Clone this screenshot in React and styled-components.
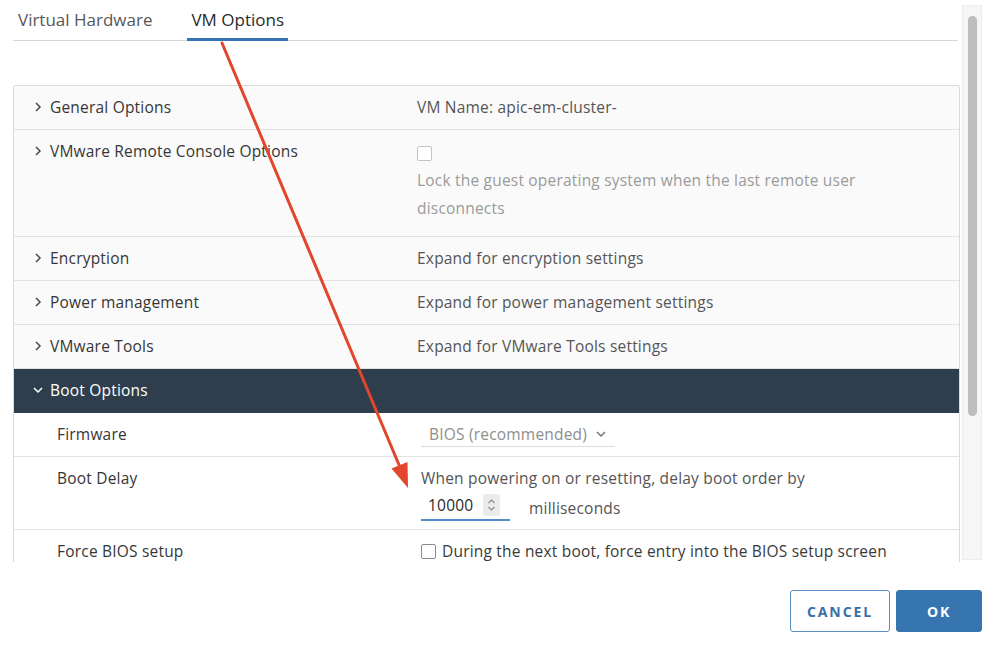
import React from 'react';
import styled, { createGlobalStyle } from 'styled-components';

const GlobalStyle = createGlobalStyle`
  html, body {
    margin: 0;
    padding: 0;
    background: #ffffff;
  }
  body {
    font-family: "Open Sans", "Liberation Sans", sans-serif;
    color: #333;
  }
`;

const Dialog = styled.div`
  position: relative;
  width: 999px;
  height: 651px;
  overflow: hidden;
  background: #fff;
`;

const Main = styled.div`
  display: flex;
  height: 562px;
  padding-left: 13px;
`;

const Content = styled.div`
  width: 947px;
  display: flex;
  flex-direction: column;
  overflow: hidden;
`;

const TabBar = styled.div`
  display: flex;
  gap: 31px;
  height: 40px;
  margin-right: 2px;
  padding-left: 1px;
  border-bottom: 1px solid #d7d7d7;
  flex-shrink: 0;
`;

const Tab = styled.div`
  padding: 0 4px;
  font-size: 17px;
  line-height: 40px;
  color: ${(p) => (p.$active ? '#2b2b2b' : '#575757')};
  box-shadow: ${(p) => (p.$active ? 'inset 0 -3px 0 #3474b4' : 'none')};
  margin-bottom: -1px;
  height: 41px;
  box-sizing: border-box;
`;

const Table = styled.div`
  margin-top: 44px;
  border: 1px solid #dadada;
  border-bottom: none;
  border-radius: 3px 3px 0 0;
  flex: 1;
  overflow: hidden;
`;

const Row = styled.div`
  display: grid;
  grid-template-columns: 403px 1fr;
  align-items: start;
  background: ${(p) => (p.$dark ? '#2e3e4d' : p.$sub ? '#ffffff' : '#fafafa')};
  border-bottom: 1px solid ${(p) => (p.$dark ? '#2e3e4d' : '#e3e3e3')};
  padding: 11px 0 ${(p) => p.$pb || 12}px;
  font-size: 15.5px;
  letter-spacing: 0.2px;
  line-height: 20px;
`;

const Label = styled.div`
  display: flex;
  align-items: center;
  gap: 6px;
  padding-left: ${(p) => (p.$sub ? 43 : 18)}px;
  color: ${(p) => (p.$dark ? '#ffffff' : '#363636')};
`;

const Value = styled.div`
  padding-left: ${(p) => (p.$sub ? 4 : 0)}px;
  color: ${(p) => (p.$muted ? '#9b9b9b' : '#555555')};
`;

const Box = styled.span`
  display: inline-block;
  flex-shrink: 0;
  width: 15px;
  height: 15px;
  border: 1px solid ${(p) => (p.$disabled ? '#c4c4c4' : '#8a8a8a')};
  border-radius: 2px;
  background: #fff;
  box-sizing: border-box;
  vertical-align: middle;
  margin-top: ${(p) => (p.$disabled ? 2 : 0)}px;
`;

const CheckLine = styled.div`
  display: flex;
  align-items: center;
  gap: 6px;
  color: #3a3a3a;
`;

const Wrapped = styled.div`
  margin-top: 5px;
  line-height: 28px;
  width: 470px;
`;

const Select = styled.div`
  display: inline-flex;
  align-items: center;
  gap: 8px;
  width: 194px;
  box-sizing: border-box;
  padding: 0 0 2px 8px;
  border-bottom: 1px solid #dcdcdc;
  color: #8e8e8e;
`;

const InputLine = styled.div`
  display: flex;
  align-items: center;
  gap: 19px;
  margin-top: 6px;
  color: #555;
`;

const NumberInput = styled.div`
  display: flex;
  align-items: center;
  justify-content: space-between;
  width: 89px;
  box-sizing: border-box;
  padding: 0 10px 3px 7px;
  border-bottom: 2px solid #4e8ccb;
  color: #2a2a2a;
`;

const Spinner = styled.span`
  display: inline-flex;
  align-items: center;
  justify-content: center;
  width: 17px;
  height: 22px;
  background: #ebebeb;
  border-radius: 2px;
`;

const Scrollbar = styled.div`
  width: 20px;
  margin: 5px 0 2px 2px;
  background: #f6f6f6;
  border: 1px solid #ededed;
  box-sizing: border-box;
  display: flex;
  justify-content: center;
  padding-top: 10px;
`;

const Thumb = styled.div`
  width: 9px;
  height: 400px;
  border-radius: 5px;
  background: #bdbdbd;
`;

const Footer = styled.div`
  display: flex;
  justify-content: flex-end;
  gap: 6px;
  padding: 28px 17px 0 0;
`;

const Button = styled.button`
  height: 42px;
  width: ${(p) => p.$w}px;
  border-radius: 3px;
  font-family: "Open Sans", "Liberation Sans", sans-serif;
  font-size: 14px;
  font-weight: 700;
  letter-spacing: 1.9px;
  cursor: pointer;
  border: 1px solid ${(p) => (p.$primary ? '#3775b1' : '#5a8fc4')};
  background: ${(p) => (p.$primary ? '#3775b1' : '#ffffff')};
  color: ${(p) => (p.$primary ? '#ffffff' : '#3a6fa5')};
`;

const Overlay = styled.svg`
  position: absolute;
  inset: 0;
  pointer-events: none;
`;

const Chevron = ({ open, color = '#4a4a4a' }) => (
  <svg width="12" height="12" viewBox="0 0 12 12">
    {open ? (
      <polyline points="2,4 6,8 10,4" fill="none" stroke={color} strokeWidth="1.5" />
    ) : (
      <polyline points="4,2 8,6 4,10" fill="none" stroke={color} strokeWidth="1.5" />
    )}
  </svg>
);

const sections = [
  { name: 'General Options', value: 'VM Name: apic-em-cluster-' },
  { name: 'VMware Remote Console Options', console: true },
  { name: 'Encryption', value: 'Expand for encryption settings' },
  { name: 'Power management', value: 'Expand for power management settings' },
  { name: 'VMware Tools', value: 'Expand for VMware Tools settings' },
];

export default function App() {
  return (
    <Dialog>
      <GlobalStyle />
      <Main>
        <Content>
          <TabBar>
            <Tab>Virtual Hardware</Tab>
            <Tab $active>VM Options</Tab>
          </TabBar>
          <Table>
            {sections.map((s) =>
              s.console ? (
                <Row key={s.name} $pb={14}>
                  <Label>
                    <Chevron />
                    {s.name}
                  </Label>
                  <Value $muted>
                    <Box $disabled />
                    <Wrapped>Lock the guest operating system when the last remote user disconnects</Wrapped>
                  </Value>
                </Row>
              ) : (
                <Row key={s.name}>
                  <Label>
                    <Chevron />
                    {s.name}
                  </Label>
                  <Value>{s.value}</Value>
                </Row>
              )
            )}
            <Row $dark>
              <Label $dark>
                <Chevron open color="#ffffff" />
                Boot Options
              </Label>
              <Value />
            </Row>
            <Row $sub $pb={9}>
              <Label $sub>Firmware</Label>
              <Value $sub>
                <Select>
                  BIOS (recommended)
                  <Chevron open color="#777" />
                </Select>
              </Value>
            </Row>
            <Row $sub $pb={8}>
              <Label $sub>Boot Delay</Label>
              <Value $sub>
                When powering on or resetting, delay boot order by
                <InputLine>
                  <NumberInput>
                    10000
                    <Spinner>
                      <svg width="9" height="14" viewBox="0 0 9 14">
                        <polyline points="1.5,5 4.5,2 7.5,5" fill="none" stroke="#888" strokeWidth="1.1" />
                        <polyline points="1.5,9 4.5,12 7.5,9" fill="none" stroke="#888" strokeWidth="1.1" />
                      </svg>
                    </Spinner>
                  </NumberInput>
                  milliseconds
                </InputLine>
              </Value>
            </Row>
            <Row $sub>
              <Label $sub>Force BIOS setup</Label>
              <Value $sub>
                <CheckLine>
                  <Box />
                  During the next boot, force entry into the BIOS setup screen
                </CheckLine>
              </Value>
            </Row>
          </Table>
        </Content>
        <Scrollbar>
          <Thumb />
        </Scrollbar>
      </Main>
      <Footer>
        <Button $w={100}>CANCEL</Button>
        <Button $w={86} $primary>OK</Button>
      </Footer>
      <Overlay width="999" height="651" viewBox="0 0 999 651">
        <line x1="222" y1="43" x2="402" y2="472" stroke="#e2462c" strokeWidth="3" strokeLinecap="round" />
        <polygon points="408,488 391.5,468.5 407.5,462" fill="#e2462c" />
      </Overlay>
    </Dialog>
  );
}
